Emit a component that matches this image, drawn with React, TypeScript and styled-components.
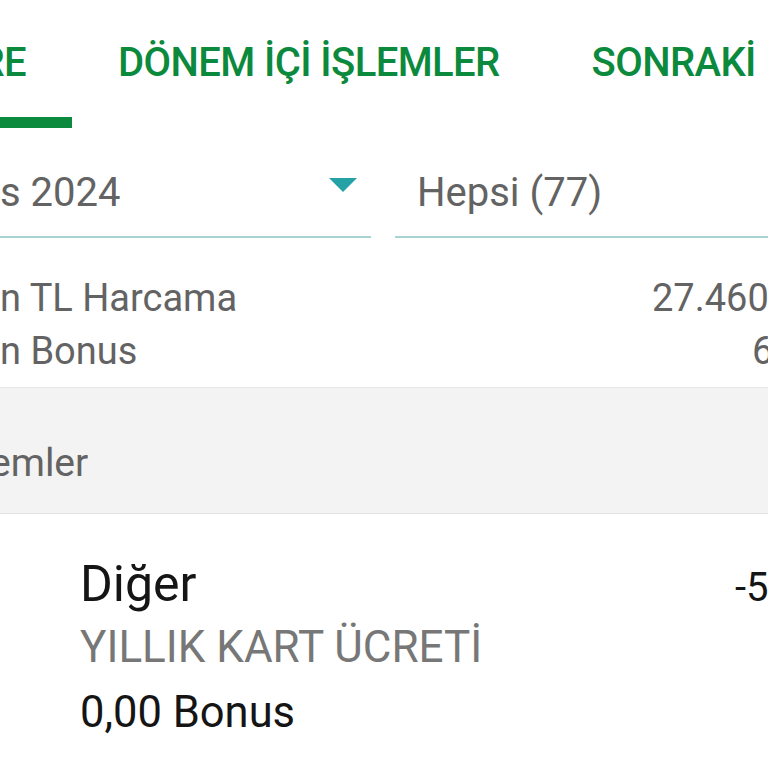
import React from 'react';
import styled, { createGlobalStyle } from 'styled-components';

const GlobalStyle = createGlobalStyle`
  html, body {
    margin: 0;
    padding: 0;
    background: #ffffff;
  }
  body {
    font-family: Roboto, "Noto Sans", "Liberation Sans", sans-serif;
    width: 768px;
    height: 768px;
    overflow: hidden;
  }
`;

const Screen = styled.div`
  width: 768px;
  height: 768px;
  overflow: hidden;
  background: #ffffff;
  display: flex;
  flex-direction: column;
`;

const TabBar = styled.div`
  display: flex;
  height: 128px;
  white-space: nowrap;
`;

const Tab = styled.div<{ $active?: boolean; $width?: number }>`
  box-sizing: border-box;
  flex: none;
  display: flex;
  justify-content: ${({ $active }) => ($active ? 'flex-end' : 'flex-start')};
  width: ${({ $width }) => ($width ? `${$width}px` : 'auto')};
  height: 128px;
  padding: 43px 46px 0 ${({ $active }) => ($active ? 0 : 46)}px;
  border-bottom: 11px solid ${({ $active }) => ($active ? '#0b8a3d' : 'transparent')};
  color: #0b8a3d;
  font-size: 40px;
  font-weight: 500;
  letter-spacing: -0.6px;
  line-height: 1;
  overflow: hidden;
`;

const FilterRow = styled.div`
  display: grid;
  grid-template-columns: 371px 1fr;
  column-gap: 24px;
`;

const Field = styled.div<{ $inset?: number }>`
  box-sizing: border-box;
  height: 110px;
  padding: 45px 14px 0 ${({ $inset }) => $inset ?? 0}px;
  border-bottom: 2px solid #a9d2d2;
  display: flex;
  justify-content: space-between;
  align-items: flex-start;
  color: #636363;
  font-size: 40px;
  line-height: 1;
  white-space: nowrap;
`;

const Caret = styled.span`
  width: 0;
  height: 0;
  margin-top: 5px;
  border-left: 14px solid transparent;
  border-right: 14px solid transparent;
  border-top: 14px solid #25a2a6;
`;

const Summary = styled.div`
  padding: 34px 0 9px;
  border-bottom: 1px solid #e6e6e6;
`;

const SummaryRow = styled.div`
  display: grid;
  grid-template-columns: 1fr 116px;
  color: #636363;
  font-size: 38px;
  line-height: 53px;
  white-space: nowrap;
`;

const Value = styled.span<{ $offset?: number }>`
  overflow: hidden;
  padding-left: ${({ $offset }) => $offset ?? 0}px;
`;

const SectionHeader = styled.div`
  box-sizing: border-box;
  height: 126px;
  padding-top: 56px;
  background: #f3f3f3;
  border-bottom: 1px solid #e2e2e2;
  color: #636363;
  font-size: 39px;
  line-height: 1;
  text-indent: -10px;
  overflow: hidden;
`;

const Item = styled.div`
  display: flex;
  align-items: baseline;
  padding: 45px 0 0 80px;
`;

const ItemBody = styled.div`
  flex: 1;
  display: flex;
  flex-direction: column;
`;

const Title = styled.div`
  color: #151515;
  font-size: 50px;
  line-height: 1;
`;

const Description = styled.div`
  margin-top: 16px;
  color: #777777;
  font-size: 44px;
  line-height: 1;
`;

const Bonus = styled.div`
  margin-top: 22px;
  color: #151515;
  font-size: 43.5px;
  line-height: 1;
`;

const Amount = styled.div`
  width: 33px;
  overflow: hidden;
  white-space: nowrap;
  color: #151515;
  font-size: 40px;
`;

export default function App() {
  return (
    <Screen>
      <GlobalStyle />
      <TabBar>
        <Tab $active $width={72}>EKSTRE</Tab>
        <Tab>DÖNEM İÇİ İŞLEMLER</Tab>
        <Tab>SONRAKİ</Tab>
      </TabBar>

      <FilterRow>
        <Field>
          <span>s 2024</span>
          <Caret />
        </Field>
        <Field $inset={22}>
          <span>Hepsi (77)</span>
        </Field>
      </FilterRow>

      <Summary>
        <SummaryRow>
          <span>n TL Harcama</span>
          <Value>27.460,00 TL</Value>
        </SummaryRow>
        <SummaryRow>
          <span>n Bonus</span>
          <Value $offset={100}>62,15</Value>
        </SummaryRow>
      </Summary>

      <SectionHeader>emler</SectionHeader>

      <Item>
        <ItemBody>
          <Title>Diğer</Title>
          <Description>YILLIK KART ÜCRETİ</Description>
          <Bonus>0,00 Bonus</Bonus>
        </ItemBody>
        <Amount>-5,00 TL</Amount>
      </Item>
    </Screen>
  );
}
